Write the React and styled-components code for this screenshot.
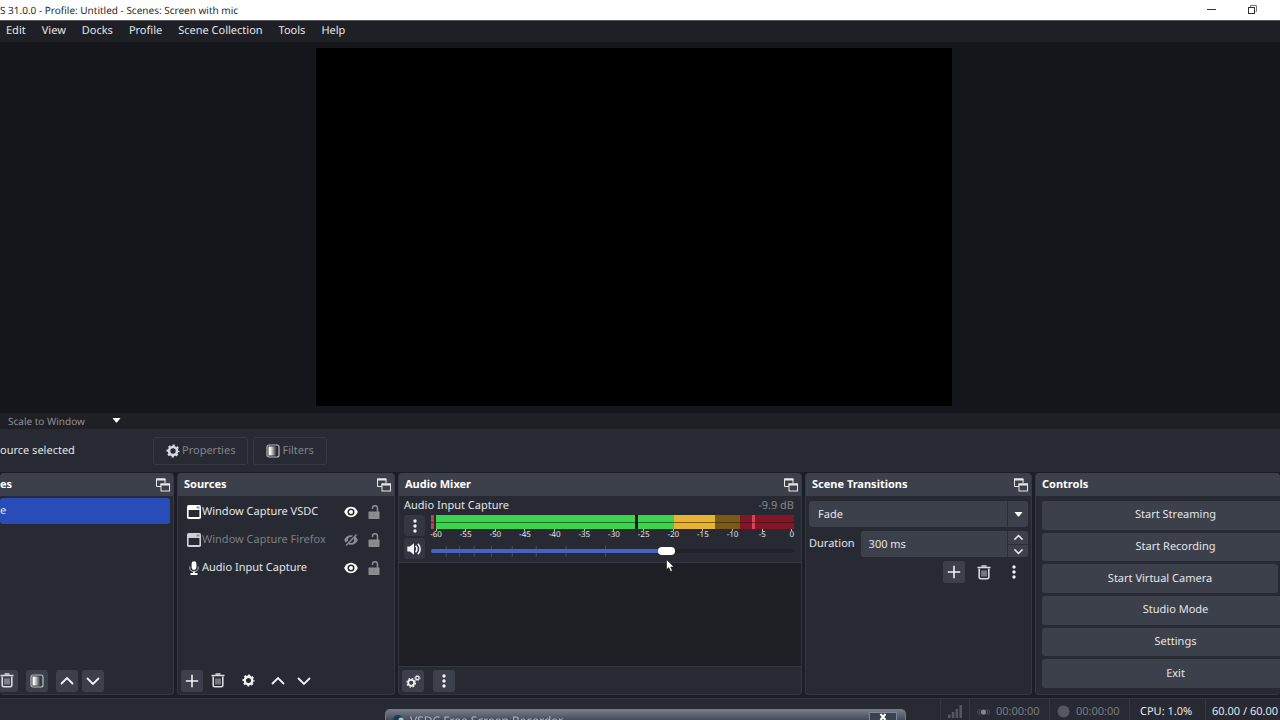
import React from "react";
import styled, { createGlobalStyle, css } from "styled-components";

const GlobalStyle = createGlobalStyle`
  *, *::before, *::after { box-sizing: border-box; }
  body { margin: 0; background: #15161b; overflow: hidden; }
  body, button, input, select {
    font-family: "Noto Sans", "Open Sans", sans-serif;
    font-size: 11px;
    line-height: 16px;
    color: #e4e5e9;
    text-rendering: geometricPrecision;
  }
  button { border: 0; padding: 0; background: none; cursor: pointer; }
  svg { display: block; flex: none; }
`;

const Window = styled.div`
  display: flex;
  flex-direction: column;
  height: 100vh;
  overflow: hidden;
`;

/* ---------- title bar and menu ---------- */

const TitleBar = styled.header`
  display: flex;
  align-items: center;
  justify-content: space-between;
  flex: none;
  height: 20px;
  padding-right: 22px;
  background: #fff;
  color: #2b2b2b;
`;

const Title = styled.span`
  font-size: 10px;
  white-space: nowrap;
`;

const WindowButtons = styled.div`
  display: flex;
  gap: 28px;
`;

const MenuBar = styled.nav`
  display: flex;
  align-items: center;
  gap: 16px;
  flex: none;
  height: 22px;
  padding: 0 0 1px 6px;
  border-top: 1px solid #55575c;
  background: #1f2025;
`;

const MenuItem = styled.button`
  white-space: nowrap;
`;

/* ---------- preview ---------- */

const Preview = styled.main`
  display: flex;
  justify-content: center;
  flex: 1;
  min-height: 0;
  padding: 6px 12px 7px 0;
  background: #15161b;
`;

const Canvas = styled.div`
  height: 100%;
  aspect-ratio: 16 / 9;
  background: #000;
`;

const ScaleBar = styled.div`
  display: flex;
  flex: none;
  height: 16px;
  padding-bottom: 2px;
  background: #1e2026;
`;

const SelectBox = styled.label`
  display: flex;
  position: relative;
  width: 100%;
`;

const ScaleBox = styled(SelectBox)`
  width: 128px;
`;

const SelectArrow = styled.span`
  position: absolute;
  top: 0;
  right: 0;
  bottom: 0;
  display: flex;
  align-items: center;
  justify-content: center;
  width: ${(p) => (p.$wide ? 24 : 21)}px;
  border-left: ${(p) => (p.$framed ? "1px solid #2b2e38" : "0")};
  pointer-events: none;
`;

const ScaleSelect = styled.select`
  width: 100%;
  padding: 0 0 0 8px;
  border: 0;
  appearance: none;
  background: transparent;
  color: #909196;
  font-size: 10px;
`;

const ContextBar = styled.div`
  display: flex;
  align-items: center;
  flex: none;
  height: 43px;
  gap: 5px;
  background: #272a33;
`;

const ContextLabel = styled.span`
  width: 148px;
  white-space: nowrap;
`;

const ContextButton = styled.button`
  display: flex;
  align-items: center;
  gap: 2px;
  height: 28px;
  padding: 0 12px;
  border: 1px solid #363943;
  border-radius: 3px;
  color: #83858c;
`;

const ContextIcon = styled.span`
  color: #d9dadd;
`;

/* ---------- docks ---------- */

const Docks = styled.div`
  display: grid;
  grid-template-columns: 174fr 218fr 404fr 227fr 245fr;
  gap: 3px;
  flex: none;
  min-height: 226px;
  padding: 1px 0 3px;
  background: #1c1e27;
`;

const DockPanel = styled.section`
  display: flex;
  flex-direction: column;
  min-width: 0;
  overflow: hidden;
  border: 1px solid #343741;
  border-top: 0;
  border-left-width: ${(p) => (p.$cut === "left" ? 0 : 1)}px;
  border-right-width: ${(p) => (p.$cut === "right" ? 0 : 1)}px;
  border-radius: 4px;
  background: #272a33;
`;

const DockHeader = styled.div`
  display: flex;
  align-items: center;
  justify-content: space-between;
  flex: none;
  height: 23px;
  padding: 0 3px 0 ${(p) => (p.$cut ? 0 : 6)}px;
  background: #3c404b;
`;

const DockTitle = styled.h2`
  margin: 0;
  font-size: 11px;
  font-weight: 700;
  line-height: 16px;
  color: #fefefe;
  white-space: nowrap;
`;

const DockBody = styled.div`
  display: flex;
  flex-direction: column;
  flex: 1;
  min-height: 0;
`;

const DockToolbar = styled.div`
  display: flex;
  align-items: center;
  gap: ${(p) => p.$gap || 4}px;
  flex: none;
  height: 27px;
  padding-left: 3px;
`;

const SceneTools = styled(DockToolbar)`
  margin-left: -7px;
`;

const ToolButton = styled.button`
  display: flex;
  align-items: center;
  justify-content: center;
  width: 22px;
  height: 22px;
  border-radius: 3px;
  color: #f2f2f4;
  ${(p) => p.$raised && css`background: #3c404b;`}
`;

const ToolGap = styled.span`
  width: 0;
`;

const SceneList = styled.div`
  display: flex;
  flex-direction: column;
  flex: 1;
  padding: 2px 3px 0 0;
`;

const SceneRow = styled.button`
  height: 26px;
  border-radius: 3px;
  background: #284cb8;
  text-align: left;
`;

const SourceList = styled.ul`
  flex: 1;
  margin: 0;
  padding: 2px 12px 0 8px;
  list-style: none;
`;

const SourceRow = styled.li`
  display: flex;
  align-items: center;
  height: 28px;
  color: ${(p) => (p.$hidden ? "#7c7e85" : "#e4e5e9")};
`;

const SourceIcon = styled.span`
  display: flex;
  justify-content: center;
  width: 16px;
  color: ${(p) => (p.$hidden ? "#d0d1d5" : "#fefefe")};
`;

const SourceName = styled.span`
  flex: 1;
  white-space: nowrap;
`;

const RowToggle = styled.button`
  display: flex;
  justify-content: center;
  width: 16px;
  margin-left: 7px;
  color: ${(p) => (p.$dim ? "#8b8c91" : "#fefefe")};
`;

/* ---------- mixer ---------- */

const MixerItem = styled.div`
  flex: none;
  height: 67px;
  padding: 1px 7px 0 5px;
  border-bottom: 1px solid #343741;
`;

const MixerHead = styled.div`
  display: flex;
  align-items: center;
  justify-content: space-between;
  height: 18px;
`;

const Volume = styled.span`
  color: #83858c;
`;

const MixerGrid = styled.div`
  display: grid;
  grid-template-columns: 21px 1fr;
  column-gap: 6px;
`;

const MixerButtons = styled.div`
  display: flex;
  flex-direction: column;
  gap: 2px;
`;

const MixerButton = styled(ToolButton)`
  width: 21px;
  height: 21px;
  background: #343741;
`;

const Meter = styled.div`
  display: flex;
  align-items: center;
  height: 14px;
  background: linear-gradient(
    to right,
    #c5404f 0 0.9%, #272a33 0.9% 1.3%,
    #3ad54c 1.3% 56.2%, #0c1a10 56.2% 56.9%,
    #3ad54c 56.9% 67%, #e9b22f 67% 78.1%,
    #7b5a13 78.1% 85.2%, #861424 85.2% 88.5%,
    #d9415b 88.5% 89.2%, #861424 89.2% 100%
  );

  &::after {
    content: "";
    flex: 1;
    height: 1px;
    background: rgba(20, 30, 26, 0.55);
  }
`;

const Scale = styled.div`
  display: flex;
  justify-content: space-between;
  height: 13px;
  padding: 0 2px 0 5px;
`;

const ScaleMark = styled.span`
  display: flex;
  flex-direction: column;
  align-items: center;
  width: 0;
  font-size: 8px;
  line-height: 8px;
  white-space: nowrap;

  &::before {
    content: "";
    flex: none;
    width: 1px;
    height: 2px;
    background: #b9bac0;
  }
`;

const SliderBox = styled.div`
  position: relative;
  height: 18px;
  padding-top: 1px;
`;

const SliderTicks = styled.svg`
  position: absolute;
  top: 3px;
  left: 0;
  width: 100%;
  height: 12px;
`;

const Slider = styled.input`
  position: relative;
  display: block;
  width: 100%;
  height: 16px;
  margin: 0;
  appearance: none;
  background: transparent;

  &::-webkit-slider-runnable-track {
    height: 4px;
    border-radius: 2px;
    background: linear-gradient(to right, #4562c4 0 65%, #20222a 65% 100%);
  }
  &::-webkit-slider-thumb {
    appearance: none;
    width: 17px;
    height: 8px;
    margin-top: -2px;
    border-radius: 4px;
    background: #fefefe;
  }
`;

const Pointer = styled.svg`
  position: absolute;
  top: 17px;
  left: 65%;
  margin-left: -1px;
`;

const MixerSpace = styled.div`
  flex: 1;
  border-bottom: 1px solid #343741;
  background: #1e1f25;
`;

/* ---------- transitions ---------- */

const TransitionBody = styled.div`
  display: flex;
  flex-direction: column;
  gap: 4px;
  padding: 5px 3px;
`;

const TransitionSelect = styled.select`
  width: 100%;
  height: 26px;
  padding: 1px 9px 0;
  border: 0;
  border-radius: 3px;
  appearance: none;
  background: #3c404b;
`;

const DurationRow = styled.div`
  display: flex;
  align-items: center;
  gap: 6px;
`;

const SpinBox = styled.div`
  display: flex;
  flex: 1;
  min-width: 0;
  height: 26px;
  border-radius: 3px;
  overflow: hidden;
  background: #3c404b;
`;

const SpinInput = styled.input`
  flex: 1;
  min-width: 0;
  padding: 1px 8px 0;
  border: 0;
  background: transparent;
`;

const SpinButtons = styled.div`
  display: grid;
  grid-template-rows: 1fr 1fr;
  width: 21px;
  border-left: 1px solid #2b2e38;
`;

const SpinButton = styled.button`
  display: flex;
  align-items: center;
  justify-content: center;
  & + & { border-top: 1px solid #2b2e38; }
`;

const TransitionTools = styled.div`
  display: flex;
  justify-content: flex-end;
  gap: 8px;
  padding-right: 3px;
`;

/* ---------- controls ---------- */

const ControlList = styled.div`
  display: flex;
  flex-direction: column;
  flex: 1;
  gap: 3px;
  margin-right: -29px;
  padding: 5px 0 6px 6px;
`;

const ControlRow = styled.div`
  display: flex;
  flex: 1;
  gap: 2px;
`;

const ControlButton = styled.button`
  flex: ${(p) => (p.$small ? "0 0 29px" : "1")};
  border-radius: 3px;
  background: #3c404b;
`;

/* ---------- status bar ---------- */

const StatusBar = styled.footer`
  display: flex;
  justify-content: flex-end;
  flex: none;
  height: 22px;
  border-top: 1px solid #343741;
  background: #272a33;
`;

const StatusItem = styled.div`
  display: flex;
  align-items: center;
  gap: 6px;
  width: ${(p) => p.$width}px;
  padding: 4px 0 0 ${(p) => p.$pad || 7}px;
  border-left: 1px solid #343741;
  color: ${(p) => (p.$dim ? "#7a7c83" : "#e4e5e9")};
  white-space: nowrap;
`;

const Recorder = styled.aside`
  position: fixed;
  left: 30%;
  bottom: -14px;
  display: flex;
  align-items: flex-start;
  gap: 5px;
  width: 521px;
  height: 25px;
  margin-left: 1px;
  padding: 2px 8px 0 7px;
  border: 1px solid #777b88;
  border-bottom: 0;
  border-radius: 5px 5px 0 0;
  background: linear-gradient(to bottom, #777b8a 0, #3f4757 11px, #343b4a 100%);
  color: #b0b4c0;
`;

const RecorderTitle = styled.span`
  flex: 1;
  padding-top: 1px;
  font-size: 12px;
  white-space: nowrap;
`;

const RecorderClose = styled.button`
  display: flex;
  justify-content: center;
  width: 28px;
  height: 18px;
  border: 1px solid #828794;
  background: #3a4252;
`;

/* ---------- icons ---------- */

const FloatIcon = () => (
  <svg width="14" height="14" viewBox="0 0 14 14" fill="none" stroke="#e8e8eb">
    <path d="M5 8.5H.5V1H9v4" />
    <path d="M0 1.5h9.500" strokeWidth="2" />
    <rect x="5" y="6" width="8.5" height="7" />
    <path d="M4.500 6.500H14" strokeWidth="2" />
  </svg>
);

const GearIcon = ({ size = 14 }) => (
  <svg width={size} height={size} viewBox="0 0 14 14" fill="none" stroke="currentColor">
    <circle cx="7" cy="7" r="4" strokeWidth="2.6" />
    <circle cx="7" cy="7" r="5.7" strokeWidth="1.6" strokeDasharray="2.3 2.177" strokeDashoffset="1.15" />
  </svg>
);

const GearsIcon = () => (
  <svg width="15" height="14" viewBox="0 0 15 14" fill="none" stroke="currentColor">
    <circle cx="5.2" cy="8.8" r="3" strokeWidth="1.8" />
    <circle cx="5.2" cy="8.8" r="4.3" strokeWidth="1.2" strokeDasharray="1.7 1.677" />
    <circle cx="11.4" cy="4" r="1.7" strokeWidth="1.2" />
    <circle cx="11.4" cy="4" r="2.6" strokeWidth=".8" strokeDasharray="1.1 .942" />
  </svg>
);

const FilterIcon = () => (
  <svg width="14" height="14" viewBox="0 0 14 14">
    <defs>
      <linearGradient id="fade">
        <stop offset="0" stopColor="#fff" />
        <stop offset=".25" stopColor="#eee" />
        <stop offset="1" stopColor="#2b2e37" />
      </linearGradient>
    </defs>
    <rect x="1" y="1" width="12" height="12" rx="2" fill="none" stroke="#b9bac0" strokeWidth="1.2" />
    <rect x="2.5" y="2.5" width="8" height="9" fill="url(#fade)" />
  </svg>
);

const TrashIcon = () => (
  <svg width="14" height="15" viewBox="0 0 14 15" fill="none" stroke="#d9dadd">
    <path d="M.5 2.5h13" strokeWidth="1.6" />
    <path d="M4.5 1h5" strokeWidth="1.4" />
    <path d="M2.2 3.5v8.8q0 1.5 1.5 1.5h6.6q1.5 0 1.5-1.5V3.5" strokeWidth="1.6" />
    <path d="M5 5.5v6M7 5.5v6M9 5.5v6" strokeWidth="1.2" stroke="#a9abb1" />
  </svg>
);

const PlusIcon = () => (
  <svg width="14" height="14" viewBox="0 0 14 14" stroke="currentColor" strokeWidth="1.6">
    <path d="M7 .8v12.4M.8 7h12.4" />
  </svg>
);

const ChevronIcon = ({ down, size = 14 }) => (
  <svg width={size} height={size} viewBox="0 0 14 14" fill="none" stroke="currentColor" strokeWidth={size < 14 ? 2.4 : 1.8} strokeLinecap="round">
    <path d={down ? "M1.5 4.5 7 10l5.5-5.5" : "M1.5 9.5 7 4l5.5 5.5"} />
  </svg>
);

const DotsIcon = () => (
  <svg width="4" height="14" viewBox="0 0 4 14" fill="currentColor">
    <circle cx="2" cy="2" r="1.7" />
    <circle cx="2" cy="7" r="1.7" />
    <circle cx="2" cy="12" r="1.7" />
  </svg>
);

const ArrowIcon = () => (
  <svg width="9" height="5" viewBox="0 0 9 5" fill="#fefefe">
    <path d="M.5 0h8L5 4.6H4z" />
  </svg>
);

const WindowIcon = () => (
  <svg width="14" height="14" viewBox="0 0 14 14">
    <rect width="14" height="14" rx="1.8" fill="currentColor" />
    <rect x="1.6" y="5" width="10.8" height="7" fill="#272a33" />
    <path d="M9.6 1.5h2.8v2H9.6z" fill="#8b8d94" />
  </svg>
);

const MicIcon = () => (
  <svg width="10" height="14" viewBox="0 0 10 14" fill="none" stroke="currentColor">
    <rect x="2.6" y=".3" width="4.8" height="8.6" rx="2.4" fill="currentColor" stroke="none" />
    <path d="M.8 5.5v1.2a4.2 3.8 0 0 0 8.4 0V5.5" stroke="#b9bac0" />
    <path d="M5 10.5v2M1.5 13h7" strokeWidth="1.8" />
  </svg>
);

const EyeIcon = () => (
  <svg width="14" height="12" viewBox="0 0 14 12">
    <path fill="currentColor" d="M7 .8C3.9.8 1.3 2.9.2 6 1.3 9.1 3.9 11.2 7 11.2S12.7 9.1 13.8 6C12.7 2.9 10.1.8 7 .8z" />
    <circle cx="7" cy="6" r="3.5" fill="#272a33" />
    <circle cx="7" cy="6" r="2" fill="currentColor" />
  </svg>
);

const EyeOffIcon = () => (
  <svg width="14" height="12" viewBox="0 0 14 12" fill="none" stroke="currentColor">
    <path fill="currentColor" stroke="none" d="M7 1.2C3.9 1.2 1.3 3.1.2 6 1.3 8.9 3.9 10.8 7 10.8S12.7 8.9 13.8 6C12.7 3.1 10.1 1.2 7 1.2z" />
    <circle cx="7" cy="6" r="3" fill="#272a33" stroke="none" />
    <path d="M1.3 11 11.3.6" stroke="#272a33" strokeWidth="2.4" />
    <path d="M2 11.6 12.6.5" strokeWidth="1.4" />
  </svg>
);

const LockIcon = () => (
  <svg width="12" height="14" viewBox="0 0 12 14" fill="none" stroke="#8b8c91">
    <path d="M4.5 4V3.2a2.5 2.5 0 0 1 5 0V7" strokeWidth="1.6" />
    <rect x=".5" y="6.5" width="11" height="7.5" rx=".8" fill="#8b8c91" stroke="none" />
    <path d="M6 9v2.5" stroke="#777980" />
  </svg>
);

const SpeakerIcon = () => (
  <svg width="15" height="12" viewBox="0 0 15 12" fill="none" stroke="currentColor" strokeWidth="1.6">
    <path d="M.3 3.5h2.6L7 .2v11.600L2.9 8.500H.3z" fill="currentColor" stroke="none" />
    <path d="M9 3.3q1.9 2.7 0 5.4M11.3 1.3q3.7 4.7 0 9.4" strokeLinecap="round" />
  </svg>
);

const SignalIcon = () => (
  <svg width="14" height="13" viewBox="0 0 14 13" fill="#565860">
    <path d="M0 9.5h2.5V13H0zM3.8 7h2.5v6H3.8zM7.6 4h2.5v9H7.6zM11.4 0h2.5v13h-2.5z" />
  </svg>
);

const StreamIcon = () => (
  <svg width="13" height="12" viewBox="0 0 14 12" fill="none" stroke="#4b4d56">
    <circle cx="7" cy="6" r="2.8" fill="#85878d" stroke="none" />
    <path d="M3.5 2.5q-2 3.5 0 7M10.5 2.5q2 3.5 0 7M1.2 3q-1 3 0 6M12.8 3q1 3 0 6" />
  </svg>
);

const RecordIcon = () => (
  <svg width="13" height="13" viewBox="0 0 13 13">
    <circle cx="6.5" cy="6.5" r="6" fill="#565860" />
  </svg>
);

/* ---------- page ---------- */

const menus = ["Edit", "View", "Docks", "Profile", "Scene Collection", "Tools", "Help"];

const sources = [
  { name: "Window Capture VSDC", Icon: WindowIcon },
  { name: "Window Capture Firefox", Icon: WindowIcon, hidden: true },
  { name: "Audio Input Capture", Icon: MicIcon },
];

const levels = [-60, -55, -50, -45, -40, -35, -30, -25, -20, -15, -10, -5, 0];
const sliderTicks = [4.2, 7.9, 11.9, 16.7, 22.4, 29, 37.2, 48.1];

function Dock({ title, cut, children }) {
  return (
    <DockPanel $cut={cut}>
      <DockHeader $cut={cut === "left"}>
        <DockTitle>{title}</DockTitle>
        {cut !== "right" && (
          <button aria-label={`Undock ${title}`}><FloatIcon /></button>
        )}
      </DockHeader>
      <DockBody>{children}</DockBody>
    </DockPanel>
  );
}

function Tool({ label, raised, children }) {
  return <ToolButton aria-label={label} $raised={raised}>{children}</ToolButton>;
}

export default function App() {
  return (
    <Window>
      <GlobalStyle />
      <TitleBar>
        <Title>S 31.0.0 - Profile: Untitled - Scenes: Screen with mic</Title>
        <WindowButtons>
          <button aria-label="Minimize">
            <svg width="12" height="12" viewBox="0 0 12 12" stroke="#333"><path d="M1 5.5h9" /></svg>
          </button>
          <button aria-label="Restore">
            <svg width="12" height="12" viewBox="0 0 12 12" fill="none" stroke="#333">
              <path d="M4.5 3V1.5h6v6H9.5" stroke="#777" />
              <rect x="2.5" y="3.5" width="6" height="6" />
            </svg>
          </button>
        </WindowButtons>
      </TitleBar>
      <MenuBar>
        {menus.map((m) => <MenuItem key={m}>{m}</MenuItem>)}
      </MenuBar>
      <Preview><Canvas /></Preview>
      <ScaleBar>
        <ScaleBox>
          <ScaleSelect aria-label="Preview scale"><option>Scale to Window</option></ScaleSelect>
          <SelectArrow $wide><ArrowIcon /></SelectArrow>
        </ScaleBox>
      </ScaleBar>
      <ContextBar>
        <ContextLabel>ource selected</ContextLabel>
        <ContextButton><ContextIcon><GearIcon /></ContextIcon>Properties</ContextButton>
        <ContextButton><ContextIcon><FilterIcon /></ContextIcon>Filters</ContextButton>
      </ContextBar>

      <Docks>
        <Dock title="es" cut="left">
          <SceneList>
            <SceneRow>e</SceneRow>
          </SceneList>
          <SceneTools>
            <Tool label="Remove scene" raised><TrashIcon /></Tool>
            <ToolGap />
            <Tool label="Scene filters" raised><FilterIcon /></Tool>
            <ToolGap />
            <Tool label="Move scene up" raised><ChevronIcon /></Tool>
            <Tool label="Move scene down" raised><ChevronIcon down /></Tool>
          </SceneTools>
        </Dock>

        <Dock title="Sources">
          <SourceList>
            {sources.map(({ name, Icon, hidden }) => (
              <SourceRow key={name} $hidden={hidden}>
                <SourceIcon $hidden={hidden}><Icon /></SourceIcon>
                <SourceName>{name}</SourceName>
                <RowToggle $dim={hidden} aria-label={`Visibility of ${name}`}>
                  {hidden ? <EyeOffIcon /> : <EyeIcon />}
                </RowToggle>
                <RowToggle aria-label={`Lock ${name}`}><LockIcon /></RowToggle>
              </SourceRow>
            ))}
          </SourceList>
          <DockToolbar>
            <Tool label="Add source" raised><PlusIcon /></Tool>
            <Tool label="Remove source"><TrashIcon /></Tool>
            <ToolGap />
            <Tool label="Source properties"><GearIcon size={13} /></Tool>
            <ToolGap />
            <Tool label="Move source up"><ChevronIcon /></Tool>
            <Tool label="Move source down"><ChevronIcon down /></Tool>
          </DockToolbar>
        </Dock>

        <Dock title="Audio Mixer">
          <MixerItem>
            <MixerHead>
              <label htmlFor="volume">Audio Input Capture</label>
              <Volume>-9.9 dB</Volume>
            </MixerHead>
            <MixerGrid>
              <MixerButtons>
                <MixerButton aria-label="Audio options"><DotsIcon /></MixerButton>
                <MixerButton aria-label="Mute"><SpeakerIcon /></MixerButton>
              </MixerButtons>
              <div>
                <Meter />
                <Scale>
                  {levels.map((l) => <ScaleMark key={l}>{l}</ScaleMark>)}
                </Scale>
                <SliderBox>
                  <SliderTicks>
                    {sliderTicks.map((x) => (
                      <line key={x} x1={`${x}%`} x2={`${x}%`} y1="1" y2="12" stroke="#4a4d58" />
                    ))}
                  </SliderTicks>
                  <Slider id="volume" type="range" min="0" max="1000" defaultValue="656" />
                  <Pointer width="9" height="13" viewBox="0 0 9 13">
                    <path d="M.5.5v10.3l2.3-2.2 1.7 3.9 1.9-.8-1.7-3.7H8z" fill="#fff" stroke="#111" strokeWidth=".6" />
                  </Pointer>
                </SliderBox>
              </div>
            </MixerGrid>
          </MixerItem>
          <MixerSpace />
          <DockToolbar $gap={9}>
            <Tool label="Advanced audio properties" raised><GearsIcon /></Tool>
            <Tool label="Mixer menu" raised><DotsIcon /></Tool>
          </DockToolbar>
        </Dock>

        <Dock title="Scene Transitions">
          <TransitionBody>
            <SelectBox>
              <TransitionSelect aria-label="Transition"><option>Fade</option></TransitionSelect>
              <SelectArrow $framed><ArrowIcon /></SelectArrow>
            </SelectBox>
            <DurationRow>
              <label htmlFor="duration">Duration</label>
              <SpinBox>
                <SpinInput id="duration" defaultValue="300 ms" />
                <SpinButtons>
                  <SpinButton aria-label="Increase"><ChevronIcon size={9} /></SpinButton>
                  <SpinButton aria-label="Decrease"><ChevronIcon size={9} down /></SpinButton>
                </SpinButtons>
              </SpinBox>
            </DurationRow>
            <TransitionTools>
              <Tool label="Add transition" raised><PlusIcon /></Tool>
              <Tool label="Remove transition"><TrashIcon /></Tool>
              <Tool label="Transition menu"><DotsIcon /></Tool>
            </TransitionTools>
          </TransitionBody>
        </Dock>

        <Dock title="Controls" cut="right">
          <ControlList>
            <ControlRow><ControlButton>Start Streaming</ControlButton></ControlRow>
            <ControlRow><ControlButton>Start Recording</ControlButton></ControlRow>
            <ControlRow>
              <ControlButton>Start Virtual Camera</ControlButton>
              <ControlButton $small aria-label="Configure virtual camera" />
            </ControlRow>
            <ControlRow><ControlButton>Studio Mode</ControlButton></ControlRow>
            <ControlRow><ControlButton>Settings</ControlButton></ControlRow>
            <ControlRow><ControlButton>Exit</ControlButton></ControlRow>
          </ControlList>
        </Dock>
      </Docks>

      <StatusBar>
        <StatusItem $width={29}><SignalIcon /></StatusItem>
        <StatusItem $width={80} $dim><StreamIcon />00:00:00</StatusItem>
        <StatusItem $width={80} $dim><RecordIcon />00:00:00</StatusItem>
        <StatusItem $width={76} $pad={10}>CPU: 1.0%</StatusItem>
        <StatusItem $width={75} $pad={6}>60.00 / 60.00</StatusItem>
      </StatusBar>

      <Recorder>
        <svg width="12" height="14" viewBox="0 0 12 14">
          <circle cx="5" cy="8" r="5" fill="#1f3a48" />
          <circle cx="8" cy="8" r="2.5" fill="#a9c4d2" />
        </svg>
        <RecorderTitle>VSDC Free Screen Recorder</RecorderTitle>
        <RecorderClose aria-label="Close">
          <svg width="8" height="8" viewBox="0 0 8 8" stroke="#fff" strokeWidth="2"><path d="M1.5 1l5 6M6.5 1l-5 6" /></svg>
        </RecorderClose>
      </Recorder>
    </Window>
  );
}
